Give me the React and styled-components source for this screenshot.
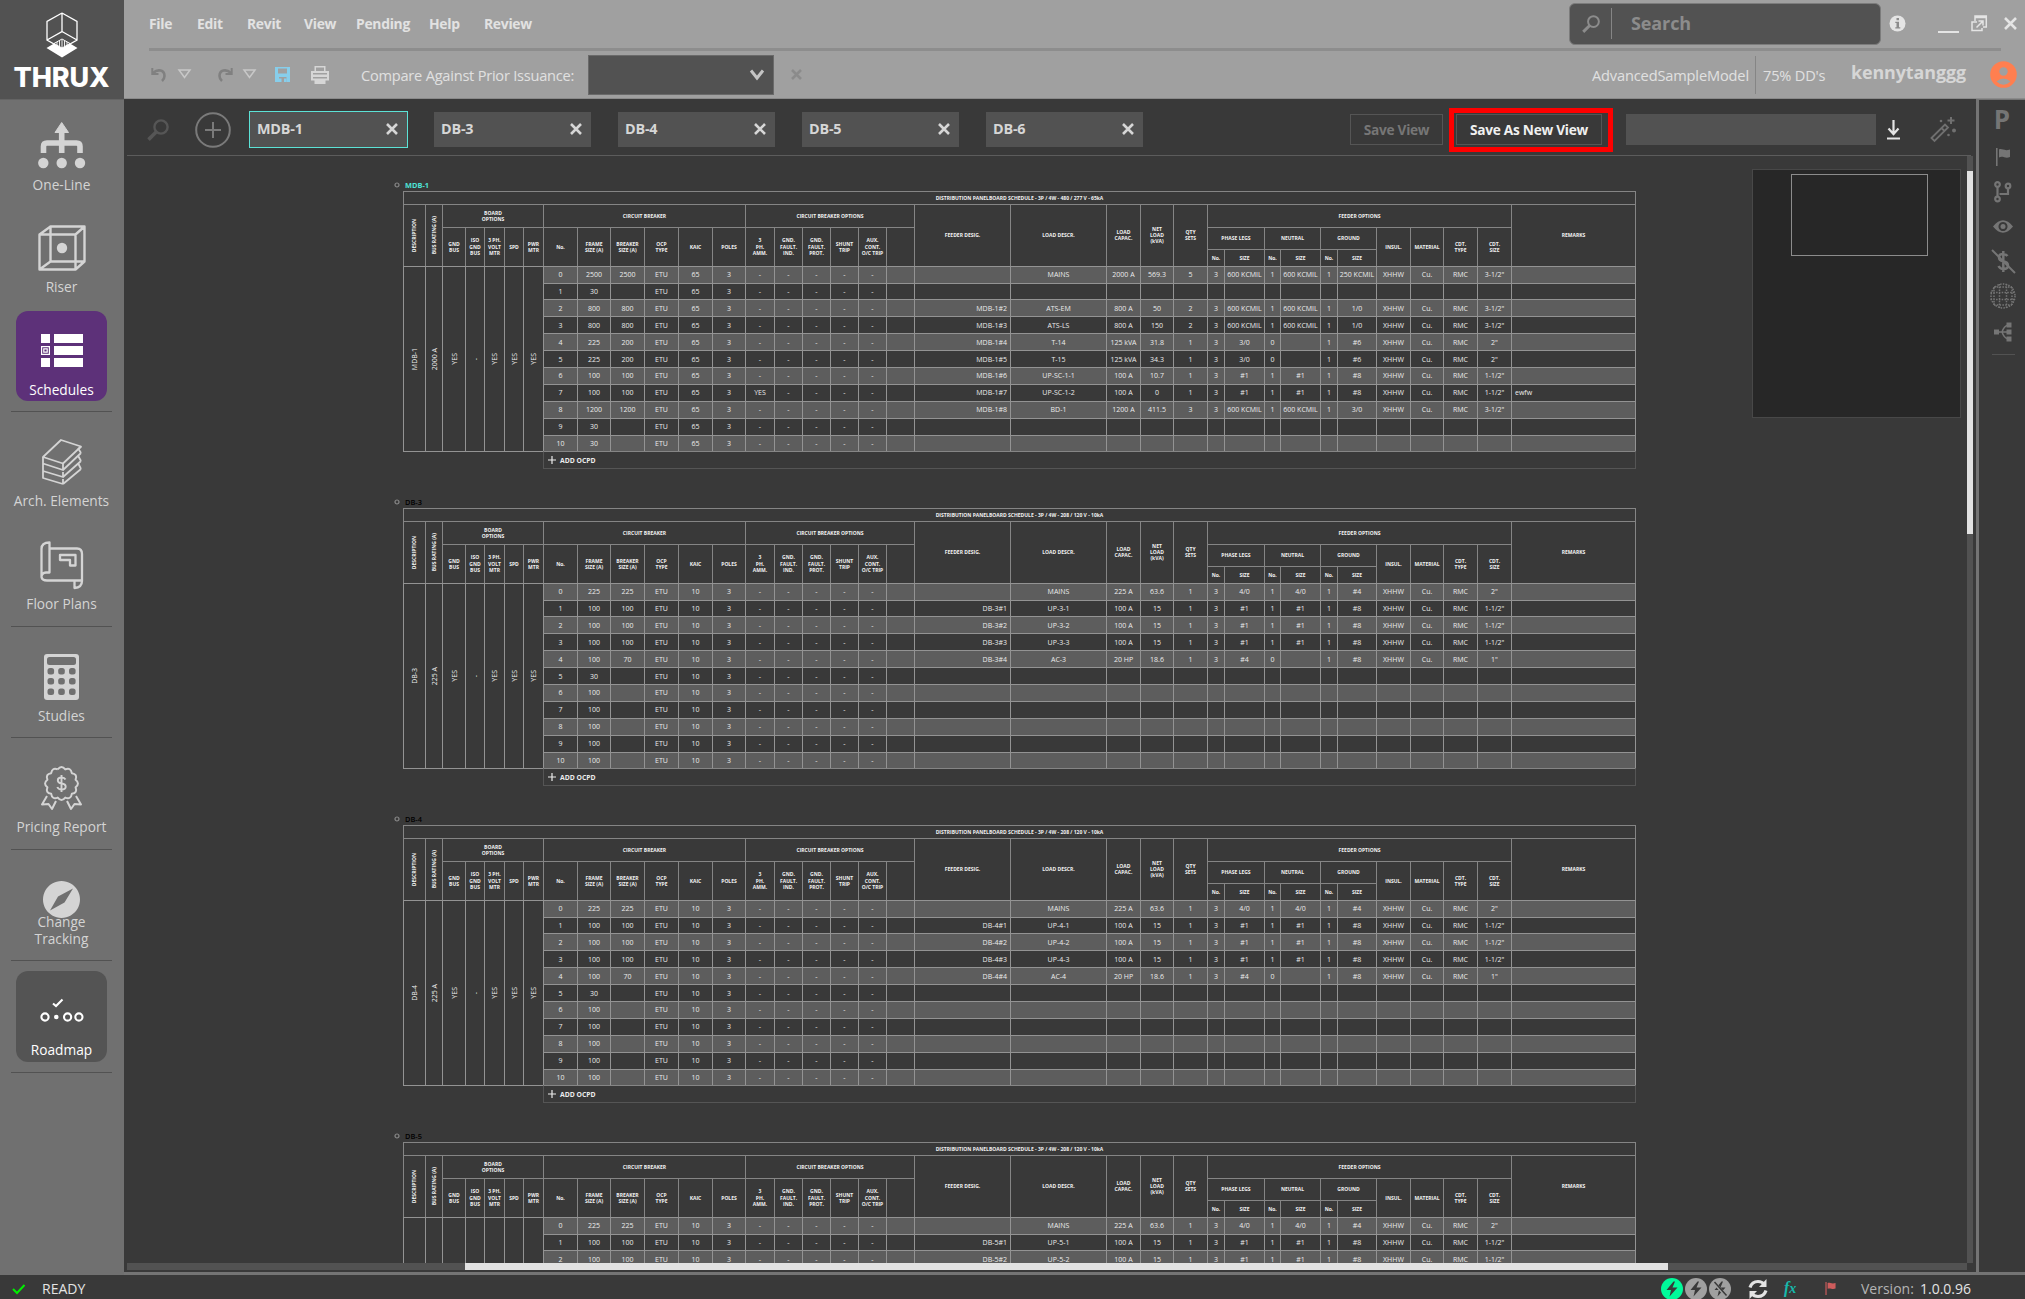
import React from "react";
import styled, { createGlobalStyle, css } from "styled-components";

const Global = createGlobalStyle`
  * { box-sizing: border-box; }
  body { margin: 0; background: #393939; overflow: hidden; }
  svg { display: block; flex: none; overflow: visible; }
`;

const App_ = styled.div`
  width: 2025px;
  height: 1299px;
  display: grid;
  grid-template-columns: 124px 1fr;
  grid-template-rows: 99px 1176px 24px;
  font-family: "Open Sans", "Noto Sans", sans-serif;
  color: #e4e4e4;
  background: #393939;
`;

/* ---------- logo ---------- */
const Brand = styled.div`
  background: #525252;
  display: flex;
  flex-direction: column;
  align-items: center;
  padding: 12px 1px 0 0;
`;
const BrandName = styled.div`
  margin-top: 8px;
  font: 800 27px/24px Inter, "Open Sans", sans-serif;
  letter-spacing: -0.1px;
  color: #fff;
`;

/* ---------- header ---------- */
const Header = styled.header`
  background: #a0a0a0;
  display: flex;
  flex-direction: column;
`;
const MenuRow = styled.div`
  height: 48px;
  display: flex;
  align-items: center;
  padding: 0 0 1px 25px;
`;
const MenuItem = styled.div`
  flex: none;
  width: ${(p) => p.$w}px;
  padding-bottom: 1px;
  font-size: 13.9px;
  font-weight: 700;
  letter-spacing: -0.3px;
  color: #e2e2e2;
  white-space: nowrap;
`;
const Spacer = styled.div`
  flex: 1;
`;
const SearchBox = styled.div`
  width: 312px;
  height: 42px;
  border-radius: 6px;
  background: #525252;
  border: 1px solid #7c7c7c;
  display: flex;
  align-items: center;
  padding-left: 12px;
  color: #8c8c8c;
`;
const SearchRule = styled.div`
  width: 1px;
  height: 31px;
  margin-left: 11px;
  background: #858585;
`;
const SearchText = styled.div`
  margin-left: 19px;
  padding-bottom: 1px;
  font-size: 18px;
  font-weight: 700;
  letter-spacing: -0.1px;
`;
const WindowIcons = styled.div`
  width: 144px;
  height: 48px;
  display: flex;
  align-items: center;
  padding-left: 8px;
`;
const HeaderRule = styled.div`
  height: 3px;
  margin: 0 24px 0 25px;
  background: #8d8d8d;
`;
const ToolRow = styled.div`
  flex: 1;
  display: flex;
  align-items: center;
  padding-left: 27px;
  border-bottom: 1px solid #8a8a8a;
`;
const Slot = styled.div`
  flex: none;
  width: ${(p) => p.$w}px;
  color: ${(p) => p.$c || "inherit"};
  white-space: nowrap;
`;
const ToolText = styled(Slot)`
  font-size: 14.6px;
  padding-top: 1px;
  letter-spacing: ${(p) => p.$ls || 0}px;
  color: #e0e0e0;
`;
const IssuanceSelect = styled.div`
  width: 186px;
  height: 40px;
  background: #525252;
  border: 1px solid #6a6a6a;
  display: flex;
  align-items: center;
  justify-content: flex-end;
  padding-right: 9px;
`;
const ModelRule = styled.div`
  width: 1px;
  height: 38px;
  background: #858585;
  margin: 0 7px 0 6px;
`;
const UserName = styled.div`
  width: 139px;
  padding-bottom: 6px;
  font-size: 17.9px;
  font-weight: 700;
  letter-spacing: -0.1px;
  color: #d6d6d6;
`;

/* ---------- sidebar ---------- */
const Sidebar = styled.nav`
  background: #707070;
  border-top: 1px solid #646464;
  padding: 5.5px 1px 0 0;
  display: flex;
  flex-direction: column;
  align-items: center;
`;
const NavItem = styled.div`
  flex: none;
  width: 91px;
  height: 90.5px;
  margin-bottom: ${(p) => (p.$grouped ? 12.2 : 0)}px;
  border-radius: 12px;
  background: ${(p) => p.$bg || "transparent"};
  color: ${(p) => (p.$bg ? "#fff" : "#d4d4d4")};
  display: grid;
  grid-template: 100% / 100%;
  & > * {
    grid-area: 1 / 1;
  }
`;
const NavIcon = styled.div`
  height: 80px;
  display: flex;
  align-items: center;
  justify-content: center;
`;
const NavLabel = styled.div`
  align-self: end;
  margin: 0 -4px 3.5px;
  text-align: center;
  font-size: 13.7px;
  line-height: 17px;
  white-space: pre;
`;
const NavRule = styled.div`
  flex: none;
  width: 101px;
  height: 1px;
  margin: 10px 0 10px;
  background: #525252;
`;

/* ---------- workspace ---------- */
const Main = styled.div`
  display: grid;
  grid-template-columns: 1852px 3px 1fr;
  min-width: 0;
`;
const Work = styled.div`
  display: flex;
  flex-direction: column;
  padding-left: 3px;
  border-bottom: 3px solid #747474;
`;
const TabBar = styled.div`
  height: 57px;
  flex: none;
  display: flex;
  align-items: center;
  padding: 5px 0 0 20px;
  margin-right: 5px;
  border-bottom: 1px solid #5c5c5c;
`;
const Tab = styled.div`
  flex: none;
  width: 157px;
  height: 35px;
  margin-right: 27px;
  background: #525252;
  box-shadow: ${(p) => (p.$active ? "0 0 0 1px #5ce2d6" : "none")};
  display: flex;
  align-items: center;
  justify-content: space-between;
  padding: 0 9px 2px 7px;
  font-size: 14.4px;
  font-weight: 700;
  letter-spacing: -0.2px;
  color: #d6d6d6;
`;
const ViewButton = styled.div`
  width: ${(p) => p.$w}px;
  height: 31px;
  border: 1px solid #555;
  display: flex;
  align-items: center;
  justify-content: center;
  padding-bottom: 1px;
  font-size: 13.7px;
  font-weight: 700;
  letter-spacing: -0.28px;
  color: ${(p) => (p.$on ? "#f0f0f0" : "#767676")};
  white-space: nowrap;
`;
const Highlight = styled.div`
  width: 164px;
  height: 44px;
  margin: 0 13px 0 6px;
  border: 5px solid #fe0000;
  display: flex;
  align-items: center;
  padding-left: 2px;
`;
const ViewInput = styled.div`
  width: 250px;
  height: 31px;
  margin-right: 11px;
  background: #525252;
`;
const CanvasRow = styled.div`
  height: 1107px;
  display: flex;
`;
const Canvas = styled.div`
  position: relative;
  width: 1840px;
  height: 1107px;
  overflow: hidden;
  padding: 23px 0 0 265px;
`;
const VTrack = styled.div`
  width: 6px;
  height: 1107px;
  padding-top: 15px;
  background: #525252;
`;
const VThumb = styled.div`
  height: 363px;
  background: #e2e2e2;
`;
const HTrack = styled.div`
  width: 1840px;
  height: 7px;
  padding-left: 338px;
  background: #525252;
`;
const HThumb = styled.div`
  width: 1203px;
  height: 7px;
  background: #e2e2e2;
`;
const MiniMap = styled.div`
  position: absolute;
  left: 1625px;
  top: 13px;
  width: 209px;
  height: 249px;
  background: #272727;
  border: 1px solid #484848;
  padding: 4px 0 0 38px;
`;
const MiniView = styled.div`
  width: 137px;
  height: 82px;
  border: 1px solid #8c8c8c;
`;
const WorkRule = styled.div`
  background: #747474;
`;
const Rail = styled.div`
  border-top: 1px solid #747474;
  border-bottom: 3px solid #747474;
  color: #757575;
  display: flex;
  flex-direction: column;
  align-items: center;
  padding: 6px 0 0 2px;
`;
const RailItem = styled.div`
  height: ${(p) => p.$h}px;
  display: flex;
  align-items: center;
  justify-content: center;
`;
const RailLetter = styled.div`
  font-size: 26px;
  line-height: 28px;
  font-weight: 700;
  margin: 0 2px 3px 0;
`;
const RailRule = styled.div`
  width: 23px;
  height: 1px;
  background: #525252;
`;

/* ---------- schedule ---------- */
const Schedule = styled.section`
  height: 317px;
`;
const ScheduleTitle = styled.div`
  height: 12px;
  display: flex;
  align-items: center;
  gap: 5px;
  padding-left: 2px;
  font-size: 7.4px;
  line-height: 11px;
  font-weight: ${(p) => (p.$active ? 700 : 600)};
  color: ${(p) => (p.$active ? "#4ee3d6" : "#000")};
`;
const edges = [
  403, 425, 442, 465, 484, 504, 523, 543, 577, 610, 644, 678, 712, 745, 774, 802,
  830, 858, 886, 914, 1010, 1106, 1140, 1173, 1207, 1224, 1264, 1280, 1320, 1337,
  1376, 1410, 1443, 1477, 1511, 1635,
];
const columns = edges.slice(1).map((e, i) => `${e - edges[i]}px`).join(" ");

const Grid = styled.div`
  margin-left: 11px;
  width: 1233px;
  display: grid;
  grid-template-columns: ${columns};
  grid-template-rows: 13px 22.5px 22.5px 16.7px repeat(11, 16.9px) 16.7px;
`;
const Cell = styled.div`
  grid-column: ${(p) => p.$x} / span ${(p) => p.$w || 1};
  grid-row: ${(p) => p.$y} / span ${(p) => p.$h || 1};
  margin: 0 -1px -1px 0;
  border: 1px solid #858585;
  display: flex;
  align-items: center;
  justify-content: center;
  text-align: center;
  overflow: hidden;
  white-space: pre;
`;
const Head = styled(Cell)`
  font-size: 5px;
  line-height: 6.1px;
  font-weight: 700;
  color: #f2f2f2;
`;
const Data = styled(Cell)`
  border-color: #939393;
  background: ${(p) => (p.$alt ? "#5d5d5d" : "#393939")};
  font-size: 7px;
  color: #ececec;
  ${(p) =>
    p.$align &&
    css`
      justify-content: ${p.$align};
      padding: 0 3px;
    `}
`;
const AddRow = styled(Cell)`
  border-color: #555;
  border-top-color: #858585;
  justify-content: flex-start;
  gap: 4px;
  padding-left: 4px;
  font-size: 6.8px;
  font-weight: 700;
  color: #ececec;
`;
const Vertical = styled.span`
  writing-mode: vertical-rl;
  transform: rotate(180deg);
`;

/* ---------- status ---------- */
const Status = styled.footer`
  grid-column: 1 / 3;
  display: flex;
  align-items: center;
  padding: 3px 0 0 12px;
  font-size: 14px;
  background: #393939;
`;
const Ready = styled.div`
  margin-left: 17px;
  font-size: 14px;
`;
const Bolts = styled.div`
  display: flex;
  gap: 2px;
`;
const Fx = styled.div`
  margin-left: 16px;
  width: 41px;
  font: italic 700 16px/20px "Liberation Serif", serif;
  color: #17b8ab;
  & small {
    font-size: 14px;
  }
`;
const Version = styled.div`
  margin-left: 25px;
  width: 59px;
  color: #b4b4b4;
`;
const VersionNo = styled.div`
  width: 105px;
`;

/* ---------- icons ---------- */
const Svg = ({ w, h, children, ...rest }) => (
  <svg width={w} height={h} viewBox={`0 0 ${w} ${h}`} fill="none" stroke="currentColor" {...rest}>
    {children}
  </svg>
);
const Cross = ({ s = 12, c = "currentColor", t = 2.6 }) => (
  <Svg w={s} h={s} stroke={c} strokeWidth={t}>
    <path d={`M1 1L${s - 1} ${s - 1}M${s - 1} 1L1 ${s - 1}`} />
  </Svg>
);
const Magnifier = ({ s, t }) => (
  <svg width={s} height={s} viewBox="0 0 22 22" fill="none" stroke="currentColor" strokeWidth={t}>
    <circle cx="14" cy="8" r="6.6" />
    <path d="M9.4 12.8L1.5 20.6" strokeWidth={t * 1.5} />
  </svg>
);
const Undo = ({ flip }) => (
  <Svg w={16} h={15} strokeWidth="2.6" transform={flip ? "scale(-1 1)" : undefined}>
    <path d="M2 6C7 1.5 13.500 3 13.500 9c0 2-.8 3.500-2.500 5" />
    <path d="M1.300 1V7H7.500" strokeWidth="2" />
  </Svg>
);
const Triangle = () => (
  <Svg w={13} h={10} strokeWidth="1.500">
    <path d="M1 0H12L6.500 7.500Z" />
  </Svg>
);
const FlagIcon = ({ w = 14, h = 18 }) => (
  <svg width={w} height={h} viewBox="0 0 14 18" fill="currentColor">
    <path d="M0 0H1.600V18H0ZM3 1.500C6 0 8 3.500 14 1.500V9C9 11 7 7.500 3 9.500Z" />
  </svg>
);

const Logo = () => (
  <Svg w={32} h={46} stroke="#fff" strokeWidth="1.300">
    <path d="M16 1L31 9.500V28L24 32M16 1L1 9.500V28L8 32M16 1V19.500L1 28M16 19.500L31 28" />
    <path d="M0.500 36L8 31.500L16 36L24 31.500L31.500 36L16 45.500Z" fill="#fff" stroke="none" />
    <path d="M8 31.500L16 27L24 31.500L16 36Z" strokeWidth="1" />
    <path d="M11 30V33M13.500 29V34.500M16 28V36M18.500 29V34.500M21 30V33" strokeWidth="0.900" />
  </Svg>
);
const OneLineIcon = () => (
  <Svg w={48} h={47} strokeWidth="5.600">
    <path d="M5.500 31V24.500Q5.500 21 9 21H38.500Q42 21 42 24.500V31M23.700 8V31" />
    <path d="M23.700 0.500L30.500 10.500H17Z" fill="currentColor" stroke="currentColor" strokeWidth="1" strokeLinejoin="round" />
    <g fill="currentColor" stroke="none">
      <circle cx="5.300" cy="41" r="5.200" />
      <circle cx="23.700" cy="41" r="5.200" />
      <circle cx="42" cy="41" r="5.200" />
    </g>
  </Svg>
);
const RiserIcon = () => (
  <Svg w={48} h={46} strokeWidth="2.400" strokeLinejoin="round">
    <path d="M1.500 9.500H37.500V44.500H1.500ZM12.500 1.500H46.500V36.500H12.500ZM1.500 9.500L12.500 1.500M37.500 9.500L46.500 1.500M37.500 44.500L46.500 36.500M1.500 44.500L12.500 36.500" />
    <circle cx="24" cy="23" r="5.200" fill="currentColor" stroke="none" />
  </Svg>
);
const SchedulesIcon = () => (
  <Svg w={42} h={33} fill="currentColor" stroke="none">
    <path d="M0 0H9V9H0ZM13 0H42V9H13ZM13 12H42V21H13ZM0 24H9V33H0ZM13 24H42V33H13Z" />
    <path d="M0.600 12.600H8.400V20.400H0.600Z" fill="none" stroke="currentColor" strokeWidth="1.200" />
    <path d="M2.800 14.800H6.200V18.200H2.800Z" fill="none" stroke="currentColor" strokeWidth="1.200" />
  </Svg>
);
const LayersIcon = () => (
  <Svg w={40} h={46} strokeWidth="1.800" strokeLinejoin="round">
    <path d="M19 1L39 7.500L21 24.500L1 18Z" />
    <path d="M1 18V39L21 45M1 24.500L21 31L39 14M1 32L21 38L39 22M21 45L39 30M21 24.500V31M21 33V38M21 40V45M39 7.500L36.500 10L39 14M36.500 17.500L39 22M36.500 25L39 30" />
  </Svg>
);
const PlansIcon = () => (
  <Svg w={43} h={48} strokeWidth="2.300" strokeLinejoin="round">
    <path d="M9.500 1.500V31.500H6Q1.500 32 1.500 36V8Q1.500 1.500 9.500 1.500ZM1.500 36Q2 39.500 7 39.500H34.500V47Q42 46.500 42 40V13Q42 7.500 37 7.500H9.500M34.500 39.500H42" />
    <path d="M20 14H35.500V24.500H30V19H20Z" />
  </Svg>
);
const CalculatorIcon = () => (
  <Svg w={36} h={46} fill="currentColor" stroke="none">
    <rect width="35" height="46" rx="3" />
    <g fill="#707070">
      <rect x="3" y="3" width="29" height="8" rx="2.500" />
      {[14, 24, 34.500].map((y) =>
        [3.500, 14.200, 25].map((x) => <rect key={x + "-" + y} x={x} y={y} width="6.600" height="6.600" rx="2.500" />)
      )}
    </g>
  </Svg>
);
const badgeEdge = Array.from({ length: 12 }, (_, i) => {
  const p = (k, r) => {
    const a = ((k * 30 - 90) * Math.PI) / 180;
    return `${(20.5 + r * Math.cos(a)).toFixed(2)} ${(17.5 + r * Math.sin(a)).toFixed(2)}`;
  };
  return `${i ? "" : "M" + p(-0.5, 14.6)}Q${p(i, 18.8)} ${p(i + 0.5, 14.6)}`;
}).join("");
const BadgeIcon = () => (
  <Svg w={41} h={45} strokeWidth="2" strokeLinejoin="round">
    <path d={badgeEdge} />
    <path d="M24.500 13.500Q23.500 11.500 20.500 11.500Q16.800 11.500 16.800 14.300Q16.800 17 20.500 17.500Q24.700 18 24.700 20.800Q24.700 23.500 20.500 23.500Q17.300 23.500 16.300 21M20.500 9V26" strokeWidth="1.900" />
    <path d="M6 30L1 38.500L7.500 38L11 43L15 35M35 30L40 38.500L33.500 38L30 43L26 35" />
  </Svg>
);
const CompassIcon = () => (
  <Svg w={37} h={37} fill="currentColor" stroke="none">
    <path fillRule="evenodd" d="M18.500 0A18.500 18.500 0 1 1 18.490 0ZM30 7.500L15 15.500L7 29.500L21.500 21.500Z" />
  </Svg>
);
const RoadmapIcon = () => (
  <Svg w={44} h={26} strokeWidth="2.100">
    <path d="M13 5.500L16 8L22.500 1.500" />
    <circle cx="5" cy="19" r="3.600" />
    <circle cx="16.300" cy="19" r="2.300" fill="currentColor" stroke="none" />
    <circle cx="27.600" cy="19" r="3.600" />
    <circle cx="38.900" cy="19" r="3.600" />
  </Svg>
);
const Bolt = ({ bg, off }) => (
  <Svg w={22} h={22} stroke="none">
    <circle cx="11" cy="11" r="11" fill={bg} />
    <path d="M12.500 3.500L5.500 12H10L8.500 18.500L16.500 9.500H11.500L14 3.500Z" fill="#393939" />
    {off && <path d="M5 4.500L17 18" stroke={bg} strokeWidth="3" />}
    {off && <path d="M5.500 4L17.500 17.500" stroke="#393939" strokeWidth="1.500" />}
  </Svg>
);

/* ---------- data ---------- */
const E = "";
const feeder = (desig, load, cap, kva, sets, ...sizes) => [desig, load, cap, kva, sets, ...sizes];
const K6 = "600 KCMIL";
const mdbRows = [
  ["2500", "2500", feeder(E, "MAINS", "2000 A", "569.3", "5", "3", K6, "1", K6, "1", "250 KCMIL", '3-1/2"')],
  ["30", E],
  ["800", "800", feeder("MDB-1#2", "ATS-EM", "800 A", "50", "2", "3", K6, "1", K6, "1", "1/0", '3-1/2"')],
  ["800", "800", feeder("MDB-1#3", "ATS-LS", "800 A", "150", "2", "3", K6, "1", K6, "1", "1/0", '3-1/2"')],
  ["225", "200", feeder("MDB-1#4", "T-14", "125 kVA", "31.8", "1", "3", "3/0", "0", E, "1", "#6", '2"')],
  ["225", "200", feeder("MDB-1#5", "T-15", "125 kVA", "34.3", "1", "3", "3/0", "0", E, "1", "#6", '2"')],
  ["100", "100", feeder("MDB-1#6", "UP-SC-1-1", "100 A", "10.7", "1", "3", "#1", "1", "#1", "1", "#8", '1-1/2"')],
  ["100", "100", feeder("MDB-1#7", "UP-SC-1-2", "100 A", "0", "1", "3", "#1", "1", "#1", "1", "#8", '1-1/2"'), "ewfw", "YES"],
  ["1200", "1200", feeder("MDB-1#8", "BD-1", "1200 A", "411.5", "3", "3", K6, "1", K6, "1", "3/0", '3-1/2"')],
  ["30", E],
  ["30", E],
];
const dbRows = (n) => [
  ["225", "225", feeder(E, "MAINS", "225 A", "63.6", "1", "3", "4/0", "1", "4/0", "1", "#4", '2"')],
  ...[1, 2, 3].map((i) => [
    "100",
    "100",
    feeder(`DB-${n}#${i}`, `UP-${n}-${i}`, "100 A", "15", "1", "3", "#1", "1", "#1", "1", "#8", '1-1/2"'),
  ]),
  ["100", "70", feeder(`DB-${n}#4`, `AC-${n}`, "20 HP", "18.6", "1", "3", "#4", "0", E, "1", "#8", '1"')],
  ["30", E],
  ["100", E],
  ["100", E],
  ["100", E],
  ["100", E],
  ["100", E],
];
const schedules = [
  { name: "MDB-1", volts: "480 / 277 V - 65kA", rating: "2000 A", kaic: "65", rows: mdbRows, active: true },
  ...[3, 4, 5].map((n) => ({
    name: `DB-${n}`,
    volts: "208 / 120 V - 10kA",
    rating: "225 A",
    kaic: "10",
    rows: dbRows(n),
  })),
];

/* column, row, column span, row span, text */
const heads = [
  [3, 2, 5, 1, "BOARD\nOPTIONS"],
  [8, 2, 6, 1, "CIRCUIT BREAKER"],
  [14, 2, 6, 1, "CIRCUIT BREAKER OPTIONS"],
  [20, 2, 1, 3, "FEEDER DESIG."],
  [21, 2, 1, 3, "LOAD DESCR."],
  [22, 2, 1, 3, "LOAD\nCAPAC."],
  [23, 2, 1, 3, "NET\nLOAD\n(kVA)"],
  [24, 2, 1, 3, "QTY\nSETS"],
  [25, 2, 10, 1, "FEEDER OPTIONS"],
  [35, 2, 1, 3, "REMARKS"],
  [25, 3, 2, 1, "PHASE LEGS"],
  [27, 3, 2, 1, "NEUTRAL"],
  [29, 3, 2, 1, "GROUND"],
  ...[25, 27, 29].flatMap((x) => [
    [x, 4, 1, 1, "No."],
    [x + 1, 4, 1, 1, "SIZE"],
  ]),
  ...[
    "GND\nBUS", "ISO\nGND\nBUS", "3 PH.\nVOLT\nMTR", "SPD", "PWR\nMTR", "No.", "FRAME\nSIZE (A)",
    "BREAKER\nSIZE (A)", "OCP\nTYPE", "KAIC", "POLES", "3\nPH.\nAMM.", "GND.\nFAULT.\nIND.",
    "GND.\nFAULT.\nPROT.", "SHUNT\nTRIP", "AUX.\nCONT.\nO/C TRIP", "",
  ].map((t, i) => [i + 3, 3, 1, 2, t]),
  ...["INSUL.", "MATERIAL", "CDT.\nTYPE", "CDT.\nSIZE"].map((t, i) => [31 + i, 3, 1, 2, t]),
];

function cellsFor(row, i, kaic) {
  const [frame, breaker, f, remark = "", amm = "-"] = row;
  const feed = f
    ? [...f.slice(0, 11), "XHHW", "Cu.", "RMC", f[11]]
    : Array(15).fill("");
  return [String(i), frame, breaker, "ETU", kaic, "3", amm, "-", "-", "-", "-", "", ...feed, remark];
}

function PanelSchedule({ s }) {
  const side = [s.name, s.rating, "YES", "-", "YES", "YES", "YES"];
  return (
    <Schedule>
      <ScheduleTitle $active={s.active}>
        <Svg w={6} h={6} stroke="#888" strokeWidth="1.200">
          <circle cx="3" cy="3" r="2" />
        </Svg>
        {s.name}
      </ScheduleTitle>
      <Grid>
        <Head $x={1} $y={1} $w={35}>{`DISTRIBUTION PANELBOARD SCHEDULE - 3P / 4W - ${s.volts}`}</Head>
        <Head $x={1} $y={2} $h={3}><Vertical>DESCRIPTION</Vertical></Head>
        <Head $x={2} $y={2} $h={3}><Vertical>BUS RATING (A)</Vertical></Head>
        {heads.map(([x, y, w, h, t]) => (
          <Head key={`${x}-${y}`} $x={x} $y={y} $w={w} $h={h}>{t}</Head>
        ))}
        {side.map((t, i) => (
          <Data key={i} $x={i + 1} $y={5} $h={11}><Vertical>{t}</Vertical></Data>
        ))}
        {s.rows.map((r, i) =>
          cellsFor(r, i, s.kaic).map((t, c) => (
            <Data
              key={`${i}-${c}`}
              $x={c + 8}
              $y={i + 5}
              $alt={i % 2 === 0}
              $align={c === 12 ? "flex-end" : c === 27 ? "flex-start" : undefined}
            >
              {t}
            </Data>
          ))
        )}
        <AddRow $x={8} $y={16} $w={28}>
          <Svg w={8} h={8} strokeWidth="1.200"><path d="M4 0V8M0 4H8" /></Svg>
          ADD OCPD
        </AddRow>
      </Grid>
    </Schedule>
  );
}

const nav = [
  ["One-Line", OneLineIcon, { grouped: true }],
  ["Riser", RiserIcon, { grouped: true }],
  ["Schedules", SchedulesIcon, { bg: "#5d3179", rule: true }],
  ["Arch. Elements", LayersIcon, { grouped: true }],
  ["Floor Plans", PlansIcon, { rule: true }],
  ["Studies", CalculatorIcon, { rule: true }],
  ["Pricing Report", BadgeIcon, { rule: true }],
  ["Change\nTracking", CompassIcon, { rule: true }],
  ["Roadmap", RoadmapIcon, { bg: "#545454", rule: true }],
];
const menus = [["File", 48], ["Edit", 50], ["Revit", 57], ["View", 52], ["Pending", 73], ["Help", 55], ["Review", 60]];

export default function App() {
  return (
    <App_>
      <Global />
      <Brand>
        <Logo />
        <BrandName>THRUX</BrandName>
      </Brand>

      <Header>
        <MenuRow>
          {menus.map(([t, w]) => (
            <MenuItem key={t} $w={w}>{t}</MenuItem>
          ))}
          <Spacer />
          <SearchBox>
            <Magnifier s={18} t={2.4} />
            <SearchRule />
            <SearchText>Search</SearchText>
          </SearchBox>
          <WindowIcons>
            <Slot $w={49}>
              <Svg w={17} h={17} stroke="none">
                <circle cx="8.500" cy="8.500" r="8" fill="#e4e4e4" />
                <path d="M7.500 3H10V5.200H7.500ZM6.300 6.700H10V12.200H11.300V13.500H6.300V12.200H7.500V8H6.300Z" fill="#8c8c8c" />
              </Svg>
            </Slot>
            <Slot $w={33}>
              <Svg w={21} h={18} strokeWidth="2"><path d="M0 17H21" /></Svg>
            </Slot>
            <Slot $w={33}>
              <Svg w={16} h={17} strokeWidth="1.500">
                <path d="M4 6V1H15.300V12H12M9 15.500H1V7H6M4 2.500H15M7.500 6H12V10.500M12 6L5.500 12.500M9 15.500H11V13" />
              </Svg>
            </Slot>
            <Cross s={13} t={2.6} />
          </WindowIcons>
        </MenuRow>
        <HeaderRule />
        <ToolRow>
          <Slot $w={27} $c="#808080"><Undo /></Slot>
          <Slot $w={39} $c="#c8c8c8"><Triangle /></Slot>
          <Slot $w={26} $c="#808080"><Undo flip /></Slot>
          <Slot $w={32} $c="#c8c8c8"><Triangle /></Slot>
          <Slot $w={36} $c="#87ceeb">
            <Svg w={15} h={15} fill="currentColor" stroke="none">
              <path fillRule="evenodd" d="M0 0H15V15H11.500V10H4V15H0ZM3 1.500V6.500H12V1.500Z" />
              <path d="M4 11.500H6.500V15H4ZM9 11.500H11.500V15H9Z" fill="currentColor" />
            </Svg>
          </Slot>
          <Slot $w={50} $c="#d6d6d6">
            <Svg w={18} h={18} fill="currentColor" stroke="none">
              <path fillRule="evenodd" d="M3.500 0H14.500V5H18V14.500H14.500V18H3.500V14.500H0V5H3.500ZM5 1.500V5H13V1.500ZM2 7V8.500H16V7ZM2 11V12.500H16V11Z" />
            </Svg>
          </Slot>
          <ToolText $w={227} $ls={-0.23}>Compare Against Prior Issuance:</ToolText>
          <IssuanceSelect>
            <Svg w={14} h={11} stroke="#c4c4c4" strokeWidth="3"><path d="M1 1.500L7 9L13 1.500" /></Svg>
          </IssuanceSelect>
          <Slot $w={17} />
          <Slot $w={11} $c="#8b8b8b"><Cross s={11} /></Slot>
          <Spacer />
          <ToolText $w={157} $ls={-0.15}>AdvancedSampleModel</ToolText>
          <ModelRule />
          <ToolText $w={88} $ls={-0.2}>75% DD's</ToolText>
          <UserName>kennytanggg</UserName>
          <Slot $w={35}>
            <Svg w={27} h={27} stroke="none">
              <circle cx="13.500" cy="13.500" r="13.300" fill="#ff7f50" />
              <circle cx="13.500" cy="10.500" r="4.200" fill="#a0a0a0" />
              <path d="M6.500 20.500Q13.500 14.500 20.500 20.500Q13.500 27 6.500 20.500Z" fill="#a0a0a0" />
            </Svg>
          </Slot>
        </ToolRow>
      </Header>

      <Sidebar>
        {nav.map(([t, Icon, o]) => (
          <React.Fragment key={t}>
            <NavItem $bg={o.bg} $grouped={o.grouped}>
              <NavIcon><Icon /></NavIcon>
              <NavLabel>{t}</NavLabel>
            </NavItem>
            {o.rule && <NavRule />}
          </React.Fragment>
        ))}
      </Sidebar>

      <Main>
        <Work>
          <TabBar>
            <Slot $w={48} $c="#565656"><Magnifier s={22} t={2.4} /></Slot>
            <Slot $w={55} $c="#7a7a7a">
              <Svg w={36} h={36} strokeWidth="2">
                <circle cx="18" cy="18" r="16.800" />
                <path d="M18 10V26M10 18H26" />
              </Svg>
            </Slot>
            {["MDB-1", "DB-3", "DB-4", "DB-5", "DB-6"].map((t, i) => (
              <Tab key={t} $active={i === 0}>
                {t}
                <Cross s={12} t={2.6} />
              </Tab>
            ))}
            <Spacer />
            <ViewButton $w={93}>Save View</ViewButton>
            <Highlight>
              <ViewButton $w={146} $on>Save As New View</ViewButton>
            </Highlight>
            <ViewInput />
            <Slot $w={43}>
              <Svg w={13} h={20} strokeWidth="2.200">
                <path d="M6.500 0V14M1.500 8.500L6.500 14L11.500 8.500M0 18.500H13" />
              </Svg>
            </Slot>
            <Slot $w={41} $c="#707070">
              <Svg w={26} h={25} strokeWidth="1.800">
                <path d="M1.500 21L15 7.500L18 10.500L4.500 24ZM11.500 11L14.500 14" />
                <path d="M21 0V7M17.500 3.500H24.500" strokeWidth="2" />
                <g fill="currentColor" stroke="none">
                  <circle cx="11" cy="4" r="1.300" />
                  <circle cx="24" cy="13.500" r="2" />
                  <circle cx="18.500" cy="18" r="1.300" />
                </g>
              </Svg>
            </Slot>
          </TabBar>
          <CanvasRow>
            <Canvas>
              {schedules.map((s) => (
                <PanelSchedule key={s.name} s={s} />
              ))}
              <MiniMap><MiniView /></MiniMap>
            </Canvas>
            <VTrack><VThumb /></VTrack>
          </CanvasRow>
          <HTrack><HThumb /></HTrack>
        </Work>
        <WorkRule />
        <Rail>
          <RailItem $h={29}><RailLetter>P</RailLetter></RailItem>
          <RailItem $h={44}><FlagIcon /></RailItem>
          <RailItem $h={26}>
            <Svg w={18} h={22} strokeWidth="2.200">
              <circle cx="3.500" cy="3.500" r="2.300" />
              <circle cx="3.500" cy="18" r="2.300" />
              <circle cx="14" cy="5" r="2.300" />
              <path d="M3.500 6V15.500M14 7.500V13H5.500" />
            </Svg>
          </RailItem>
          <RailItem $h={43}>
            <Svg w={20} h={13} fill="currentColor" stroke="none">
              <path fillRule="evenodd" d="M0 6.500Q10-6 20 6.500Q10 19 0 6.500ZM10 2A4.500 4.500 0 1 0 10.010 2Z" />
              <circle cx="10" cy="6.500" r="2.500" />
            </Svg>
          </RailItem>
          <RailItem $h={27}>
            <Svg w={25} h={25} strokeWidth="2.500">
              <path d="M16.500 7Q15 5 12 5Q8 5 8 8.500Q8 11.500 12 12.300Q17 13 17 16.500Q17 20 12.500 20Q9 20 7.500 17M12.300 2V23" />
              <path d="M1 1L24 24" strokeWidth="2" />
            </Svg>
          </RailItem>
          <RailItem $h={42}>
            <Svg w={26} h={26} strokeWidth="1.500" strokeDasharray="1.500 1.300">
              <circle cx="13" cy="13" r="12" />
              <path d="M0.500 9.500H25.500M0.500 16.500H25.500M4 4H22M4 22H22M9.500 1V25M16.500 1V25M4 4V22M22 4V22" />
            </Svg>
          </RailItem>
          <RailItem $h={30}>
            <Svg w={18} h={20} strokeWidth="1.500">
              <path d="M3 10H16M14 3Q10 4 8 10Q10 16 14 17" />
              <path d="M0 7.500H5V12.500H0ZM12.500 0.500H17.500V5.500H12.500ZM12.500 7.500H17.500V12.500H12.500ZM12.500 14.500H17.500V19.500H12.500Z" fill="currentColor" stroke="none" />
            </Svg>
          </RailItem>
          <RailItem $h={14}><RailRule /></RailItem>
        </Rail>
      </Main>

      <Status>
        <Svg w={13} h={10} stroke="#00f000" strokeWidth="2"><path d="M1 5L5 9L12.500 1" /></Svg>
        <Ready>READY</Ready>
        <Spacer />
        <Bolts>
          <Bolt bg="#00fa9a" />
          <Bolt bg="#a0a0a0" />
          <Bolt bg="#a0a0a0" off />
        </Bolts>
        <Slot $w={17} />
        <Svg w={20} h={20} strokeWidth="3.200">
          <path d="M2 8.500Q4 2.500 10 2.500Q14 2.500 16.500 5.500M18 11.500Q16 17.500 10 17.500Q6 17.500 3.500 14.500" />
          <path d="M18.500 0V8H11ZM1.500 20V12H9Z" fill="currentColor" stroke="none" />
        </Svg>
        <Fx>f<small>x</small></Fx>
        <Slot $w={11} $c="#cd5c5c"><FlagIcon w={11} h={13} /></Slot>
        <Version>Version:</Version>
        <VersionNo>1.0.0.96</VersionNo>
      </Status>
    </App_>
  );
}
